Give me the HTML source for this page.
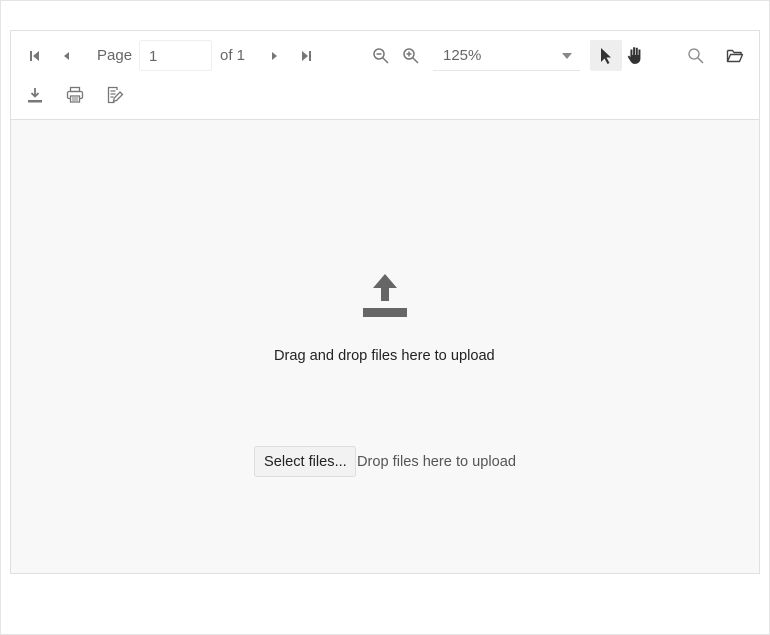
<!DOCTYPE html>
<html><head><style>
*{margin:0;padding:0;box-sizing:border-box}
body{width:770px;height:635px;background:#fff;font-family:"Liberation Sans",sans-serif;position:relative;overflow:hidden}
.outer{position:absolute;left:0;top:0;width:770px;height:635px;border:1px solid #e4e4e4}
.box{position:absolute;left:10px;top:30px;width:750px;height:544px;border:1px solid #e0e0e0;background:#f8f8f8}
.tb{position:absolute;left:0;top:0;width:748px;height:89px;background:#fff;border-bottom:1px solid #e0e0e0}
.t{position:absolute;color:#666;font-size:15px;white-space:nowrap}
svg{position:absolute}
.inp{position:absolute;left:128px;top:9px;width:73px;height:31px;border:1px solid #eee;border-radius:3px;font-size:15px;color:#666;padding:7px 9px}
.zoom{position:absolute;left:422px;top:9px;width:147px;height:31px;border-bottom:1px solid #e6e6e6;font-size:15px;color:#666;padding:7px 10px}
.sel{position:absolute;left:579px;top:9px;width:32px;height:31px;background:#eee;border-radius:2px}
.btn{position:absolute;left:243px;top:415px;width:102px;height:31px;border:1px solid #ddd;border-radius:3px;background:#f2f2f2;font-size:14.6px;color:#222;padding:7px 9px;white-space:nowrap}
</style></head><body>
<div class="outer"></div>
<div class="box">
<div class="tb">
<svg width="12" height="12" style="left:18px;top:19px" viewBox="0 0 12 12"><rect x="1" y="1" width="2" height="10" fill="#777"/><path d="M10 1L4 6l6 5z" fill="#777"/></svg>
<svg width="12" height="12" style="left:50px;top:19px" viewBox="0 0 12 12"><path d="M8 2L3 6l5 4z" fill="#777"/></svg>
<div class="t" style="left:86px;top:16px">Page</div>
<div class="inp">1</div>
<div class="t" style="left:209px;top:16px">of 1</div>
<svg width="12" height="12" style="left:257px;top:19px" viewBox="0 0 12 12"><path d="M4 2l5 4-5 4z" fill="#777"/></svg>
<svg width="12" height="12" style="left:289px;top:19px" viewBox="0 0 12 12"><path d="M2 1l6 5-6 5z" fill="#777"/><rect x="9" y="1" width="2" height="10" fill="#777"/></svg>
<svg width="18" height="18" style="left:361px;top:16px" viewBox="0 0 18 18"><circle cx="7" cy="7" r="5" fill="none" stroke="#777" stroke-width="1.5"/><path d="M4.5 7h5M11 11l5 5" stroke="#777" stroke-width="1.5"/></svg>
<svg width="18" height="18" style="left:391px;top:16px" viewBox="0 0 18 18"><circle cx="7" cy="7" r="5" fill="none" stroke="#777" stroke-width="1.5"/><path d="M4.5 7h5M7 4.5v5M11 11l5 5" stroke="#777" stroke-width="1.5"/></svg>
<div class="zoom">125%</div>
<svg width="12" height="10" style="left:550px;top:20px" viewBox="0 0 12 10"><path d="M1 2h10L6 8z" fill="#888"/></svg>
<div class="sel"></div>
<svg width="14" height="18" style="left:588px;top:16px" viewBox="0 0 14 18"><path d="M2 1v14l3.5-3.5 3 5.5 2-1-3-5.5H12z" fill="#333"/></svg>
<svg width="20" height="20" style="left:615px;top:14px" viewBox="0 0 18 18"><path d="M4 9V4h1.8v5h.6V2h1.8v7h.6V2.5h1.8V9h.6V4h1.8v8c0 3-2 5-5 5-2 0-3-1-4-2.5L1.5 10.5l1.3-1L4 11z" fill="#333"/></svg>
<svg width="18" height="18" style="left:676px;top:16px" viewBox="0 0 18 18"><circle cx="7" cy="7" r="5" fill="none" stroke="#888" stroke-width="1.3"/><path d="M11 11l5 5" stroke="#888" stroke-width="1.5"/></svg>
<svg width="18" height="16" style="left:715px;top:17px" viewBox="0 0 18 16"><path d="M1.5 2.5h5l1.5 2h7v2M1.5 2.5v11h12l3-7H4.5l-3 7" fill="none" stroke="#444" stroke-width="1.4" stroke-linejoin="round"/></svg>
<svg width="18" height="18" style="left:15px;top:55px" viewBox="0 0 18 18"><path d="M9 2v8M5.5 7L9 10.5 12.5 7" stroke="#777" stroke-width="1.8" fill="none"/><rect x="2" y="14" width="14" height="2.5" fill="#777"/></svg>
<svg width="18" height="18" style="left:55px;top:55px" viewBox="0 0 18 18"><rect x="4.5" y="1.5" width="9" height="4" fill="none" stroke="#777" stroke-width="1.3"/><rect x="1.5" y="5.5" width="15" height="7" rx="1.5" fill="none" stroke="#777" stroke-width="1.3"/><rect x="4.5" y="10" width="9" height="6" fill="#fff" stroke="#777" stroke-width="1.3"/><path d="M6 12h6M6 14h6" stroke="#777"/></svg>
<svg width="18" height="18" style="left:95px;top:55px" viewBox="0 0 18 18"><path d="M11 4V1.5H2.5v15h6M4.5 5h5M4.5 8h5M4.5 11h3" fill="none" stroke="#777" stroke-width="1.3"/><path d="M14 6l2.5 2.5-6 6-3 .7.7-3z" fill="none" stroke="#777" stroke-width="1.3"/></svg>
</div>
<svg width="46" height="46" style="left:351px;top:241px" viewBox="0 0 46 46"><path d="M23 2L35 16h-8v13h-8V16h-8z" fill="#666"/><rect x="1" y="36" width="44" height="9" fill="#666"/></svg>
<div class="t" style="left:263px;top:317px;color:#222;font-size:14.6px">Drag and drop files here to upload</div>
<div class="btn">Select files...</div>
<div class="t" style="left:346px;top:423px;color:#555;font-size:14.6px">Drop files here to upload</div>
</div>
</body></html>
